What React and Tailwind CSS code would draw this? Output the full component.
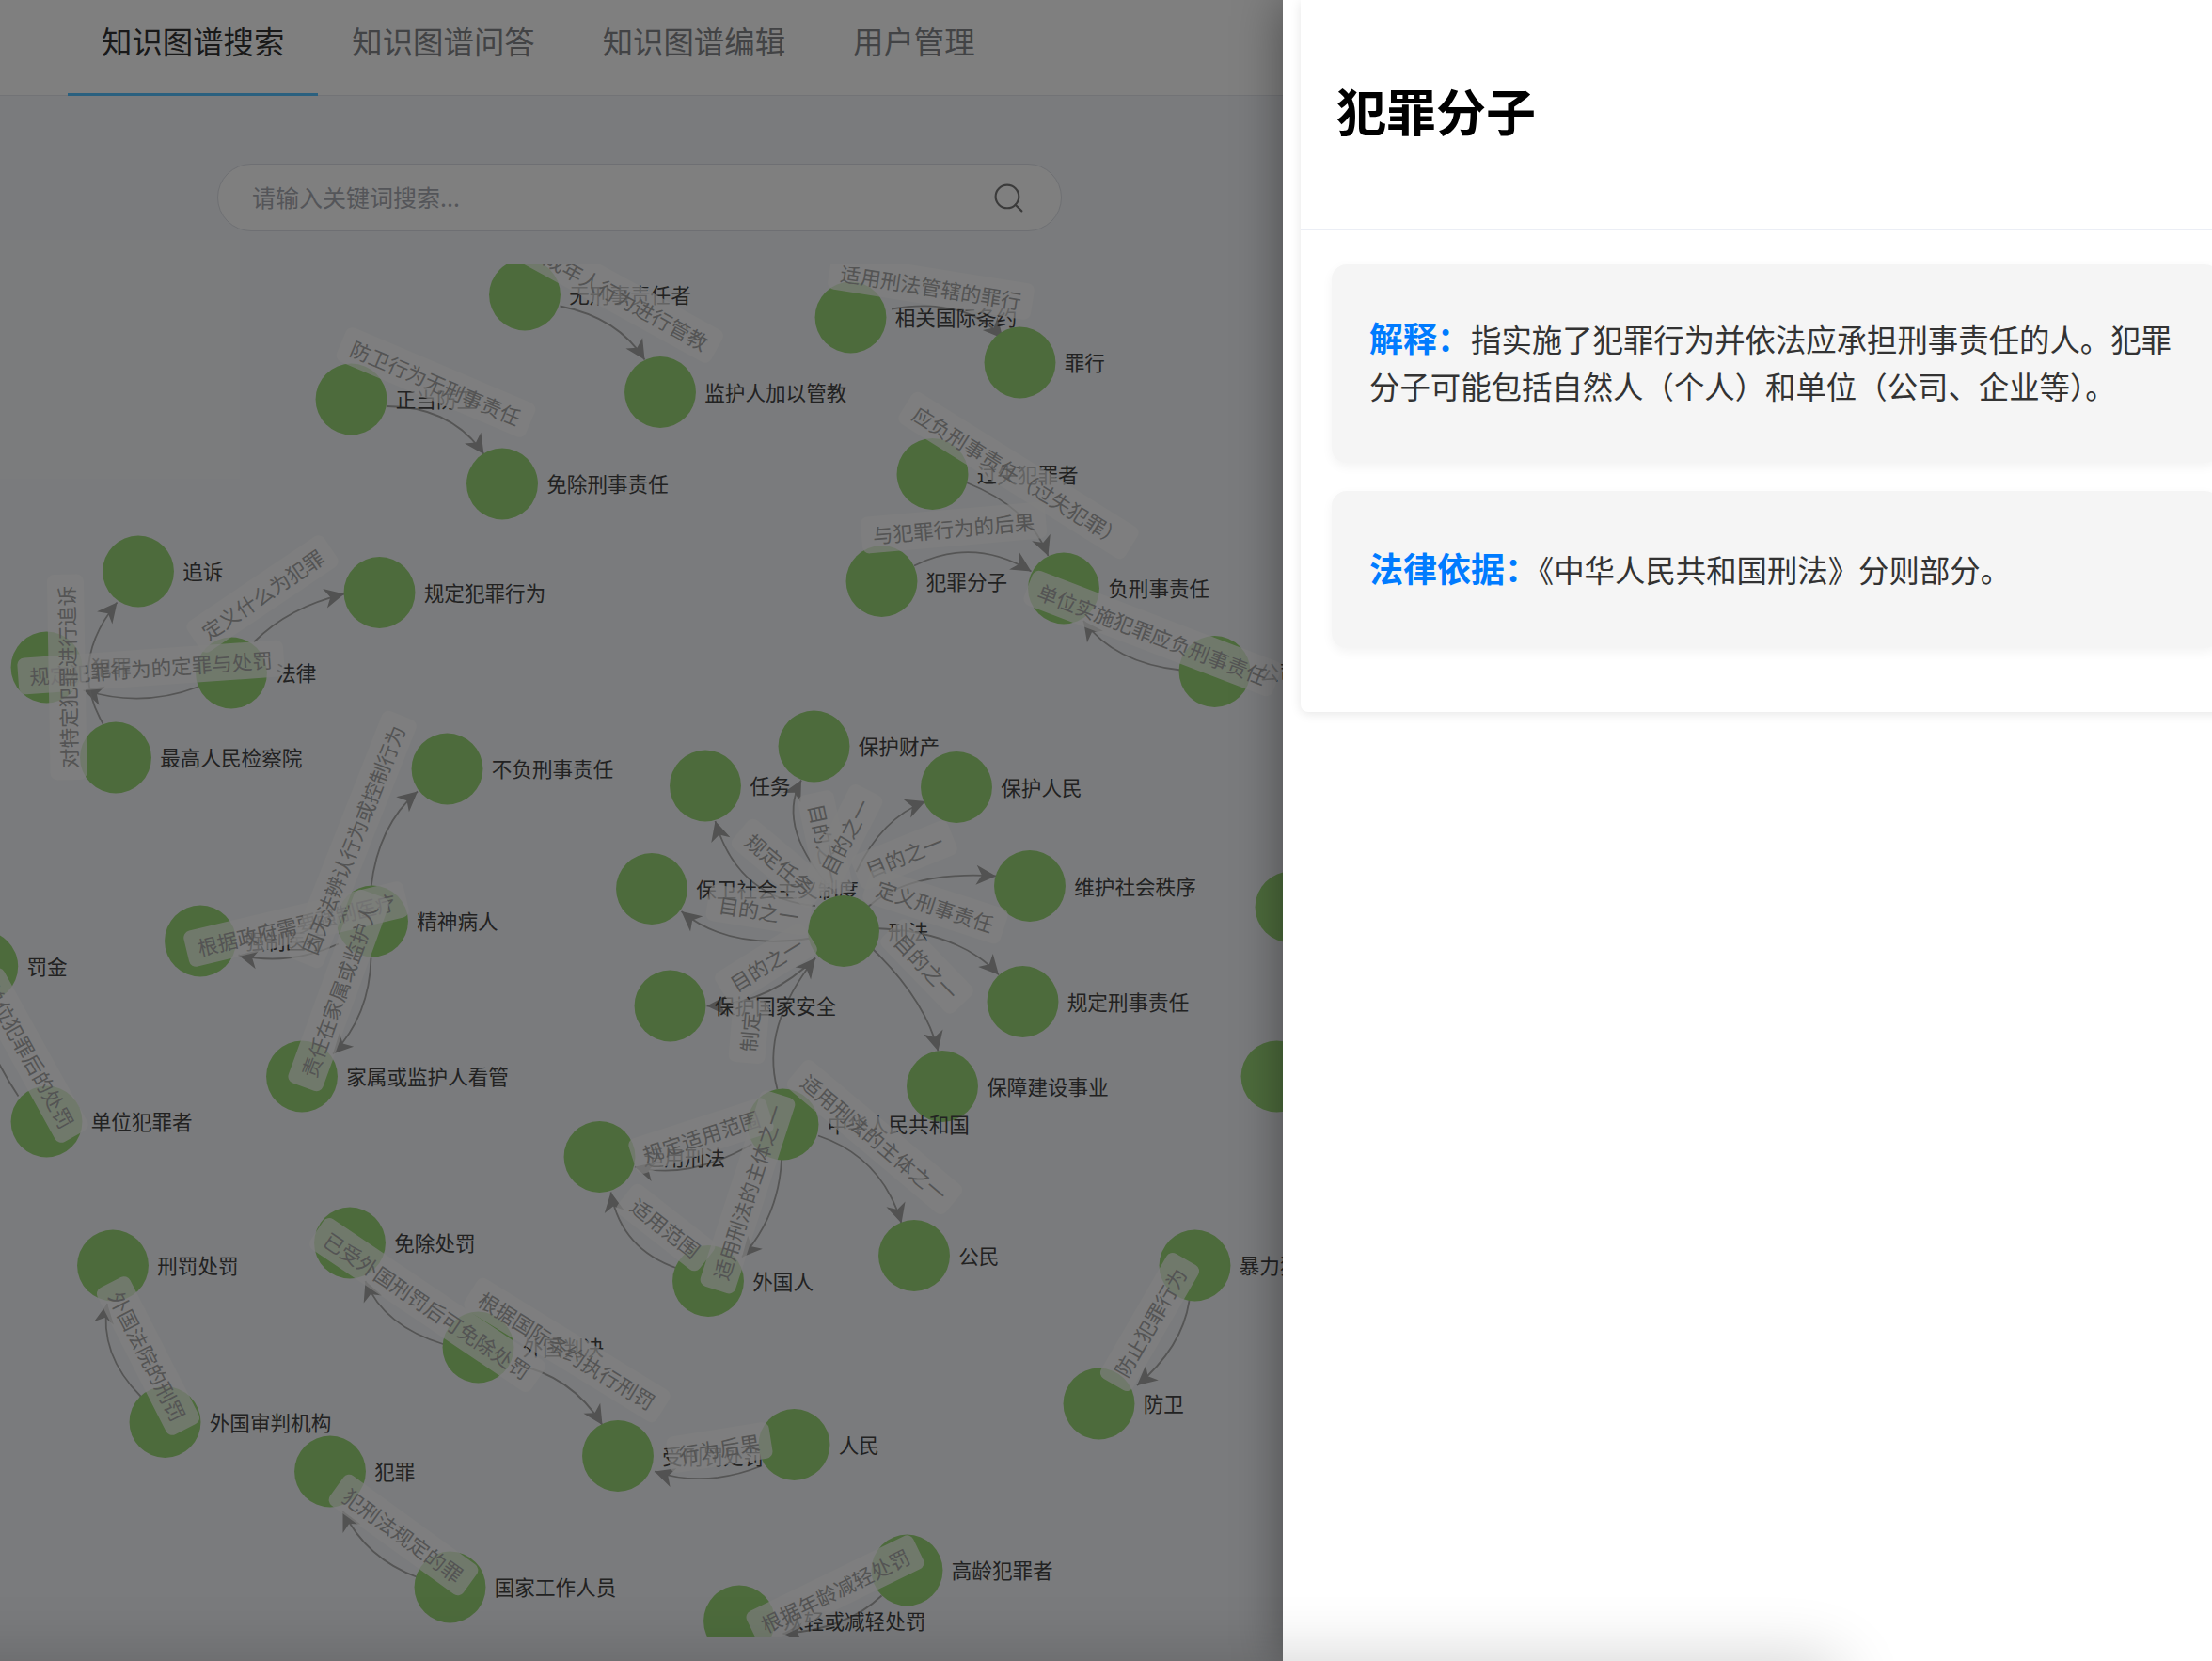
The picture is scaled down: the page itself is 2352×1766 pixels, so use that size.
import React from "react";
import { Search } from "lucide-react";

const tabs = ["知识图谱搜索", "知识图谱问答", "知识图谱编辑", "用户管理"];

// graph coordinates, drawn in a 1568 wide viewBox
const nodes = [
  [372, 209, "无刑事责任者"],
  [468, 278, "监护人加以管教"],
  [603, 225, "相关国际条约"],
  [723, 257, "罪行"],
  [249, 283, "正当防卫"],
  [356, 343, "免除刑事责任"],
  [661, 336, "过失犯罪者"],
  [98, 405, "追诉"],
  [269, 420, "规定犯罪行为"],
  [625, 412, "犯罪分子"],
  [754, 417, "负刑事责任"],
  [164, 477, "法律"],
  [33, 473, "犯罪"],
  [82, 537, "最高人民检察院"],
  [317, 545, "不负刑事责任"],
  [861, 476, "公司"],
  [577, 529, "保护财产"],
  [500, 557, "任务"],
  [678, 558, "保护人民"],
  [462, 630, "保卫社会主义制度"],
  [730, 628, "维护社会秩序"],
  [598, 660, "刑法"],
  [725, 710, "规定刑事责任"],
  [475, 713, "保护国家安全"],
  [668, 770, "保障建设事业"],
  [264, 653, "精神病人"],
  [142, 667, "强制医疗"],
  [-12.5, 685, "罚金"],
  [214, 763, "家属或监护人看管"],
  [33, 795, "单位犯罪者"],
  [555, 797, "中华人民共和国"],
  [425, 820, "适用刑法"],
  [502, 908, "外国人"],
  [648, 890, "公民"],
  [248, 881, "免除处罚"],
  [80, 897, "刑罚处罚"],
  [847, 897, "暴力犯罪"],
  [779, 995, "防卫"],
  [339, 955, "外国判决"],
  [117, 1008, "外国审判机构"],
  [438, 1032, "受刑罚处罚"],
  [563, 1024, "人民"],
  [234, 1043, "犯罪"],
  [319, 1125, "国家工作人员"],
  [643, 1113, "高龄犯罪者"],
  [524, 1149, "从轻或减轻处罚"],
  [915, 643, ""],
  [905, 763, ""],
];

// start, control, tip
const edges = [
  [397, 217, 438, 225, 457, 255],
  [274, 288, 320, 288, 343, 322],
  [632, 219, 685, 210, 711, 240],
  [685, 342, 730, 360, 743, 394],
  [648, 401, 690, 380, 731, 405],
  [837, 475, 790, 470, 768, 440],
  [180, 455, 205, 430, 244, 421],
  [140, 487, 100, 502, 59, 489],
  [73, 513, 48, 470, 83, 427],
  [263, 629, 268, 585, 296, 561],
  [240, 669, 205, 685, 169, 677],
  [263, 679, 262, 720, 236, 747],
  [13, 777, -5, 750, -15, 720],
  [594, 635, 549, 588, 568, 553],
  [578, 642, 523, 637, 507, 582],
  [607, 618, 625, 580, 656, 568],
  [615, 643, 644, 617, 706, 621],
  [620, 658, 680, 660, 708, 691],
  [619, 673, 656, 709, 665, 745],
  [575, 665, 517, 674, 483, 646],
  [578, 679, 544, 712, 501, 713],
  [551, 772, 539, 728, 578, 679],
  [533, 811, 488, 837, 450, 827],
  [580, 805, 625, 820, 639, 867],
  [554, 822, 552, 862, 526, 891],
  [480, 899, 440, 885, 433, 845],
  [315, 953, 272, 940, 259, 908],
  [365, 967, 405, 975, 427, 1010],
  [540, 1039, 500, 1055, 464, 1043],
  [100, 990, 70, 960, 76, 924],
  [296, 1118, 260, 1105, 243, 1071],
  [843, 922, 838, 955, 806, 982],
  [625, 1131, 600, 1155, 555, 1158],
];

// centre x, centre y, angle, text; later ones lie over earlier ones
const edgeLabels = [
  [107, 473, -4, "规定犯罪行为的定罪与处罚"],
  [47.5, 480, -91, "对特定犯罪进行追诉"],
  [186, 421, -34, "定义什么为犯罪"],
  [309, 271, 23, "防卫行为无刑事责任"],
  [438, 209, 28.8, "未成年人行为进行管教"],
  [660, 203, 9, "适用刑法管辖的罪行"],
  [722, 337, 32, "应负刑事责任（过失犯罪）"],
  [676, 374, -5, "与犯罪行为的后果"],
  [817, 449, 21, "单位实施犯罪应负刑事责任"],
  [585, 598, 78, "目的之一"],
  [599, 593, -63, "目的之一"],
  [641, 606, -22, "目的之一"],
  [663, 642, 18, "定义刑事责任"],
  [657, 685, 46, "目的之一"],
  [553, 612, 40, "规定任务"],
  [538, 645, 9, "目的之一"],
  [543, 683, -32, "目的之一"],
  [531, 731, -85, "制定"],
  [497, 805, -18, "规定适用范围"],
  [620, 806, 40, "适用刑法的主体之一"],
  [530, 845, -72, "适用刑法的主体之一"],
  [472, 870, 38, "适用范围"],
  [105, 961, 63, "外国法院的刑罚"],
  [303, 925, 34, "已受外国刑罚后可免除处罚"],
  [402, 957, 31.6, "根据国际条约执行刑罚"],
  [510, 1026, -9, "行为后果"],
  [592, 1127, -26, "根据年龄减轻处罚"],
  [815, 937, -60, "防止犯罪行为"],
  [286, 1088, 36, "犯刑法规定的罪"],
  [210, 655, -13.4, "根据政府需要强制医疗"],
  [240, 702, -70, "责任在家属或监护人"],
  [250, 595, -68.5, "因无法辨认行为或控制行为"],
  [21, 748, 61, "单位犯罪后的处罚"],
];

function arrowPoints(cx, cy, tx, ty) {
  const len = Math.hypot(tx - cx, ty - cy);
  const ux = (tx - cx) / len;
  const uy = (ty - cy) / len;
  const L = 14;
  const W = 7;
  const p = (back, side) => `${tx - ux * back - uy * side},${ty - uy * back + ux * side}`;
  return [p(0, 0), p(L, W), p(L * 0.72, 0), p(L, -W)].join(" ");
}

function Graph() {
  return (
    <svg viewBox="0 187.33 1568 972.67" className="block w-[2352px] h-[1459px]">
      {edges.map(([sx, sy, cx, cy, tx, ty], i) => (
        <g key={i}>
          <path d={`M${sx} ${sy}Q${cx} ${cy} ${tx} ${ty}`} fill="none" stroke="#aaaaaa" strokeWidth="1.2" />
          <polygon points={arrowPoints(cx, cy, tx, ty)} fill="#a4a4a4" />
        </g>
      ))}
      {nodes.map(([x, y, name], i) => (
        <g key={i}>
          <circle cx={x} cy={y} r="25.3" fill="#9ad678" />
          <text x={x + 31.5} y={y - 0.5} dominantBaseline="central" fontSize="14.4" className="fill-[#444444]">
            {name}
          </text>
        </g>
      ))}
      {edgeLabels.map(([x, y, angle, text], i) => (
        <g key={i} transform={`translate(${x} ${y}) rotate(${angle})`}>
          <rect
            x={-(text.length * 14.4 + 16) / 2}
            y="-13"
            width={text.length * 14.4 + 16}
            height="26"
            rx="5"
            fill="#ffffff"
            fillOpacity="0.7"
          />
          <text textAnchor="middle" dominantBaseline="central" fontSize="14.4" className="fill-[#a8a8a8]">
            {text}
          </text>
        </g>
      ))}
    </svg>
  );
}

function Drawer() {
  return (
    <aside className="absolute top-0 right-0 bottom-0 z-20 w-[988px] overflow-hidden bg-white pl-[19px] shadow-[0_0_48px_rgba(0,0,0,0.4)]">
      <div className="w-[1000px] rounded-b-lg bg-white pb-[68px] shadow-[0_2px_12px_rgba(0,0,0,0.1)]">
        <div className="flex h-[245px] items-center border-b border-[#ebeef5] pb-[9px] pl-[38px]">
          <h2 className="text-[53px] font-bold text-black">犯罪分子</h2>
        </div>
        <div className="flex flex-col gap-[30px] pt-[36px] pl-[33px]">
          <div className="flex h-[211px] w-[944px] items-center rounded-2xl bg-[#f5f5f5] px-[40px] pb-[5px] text-[32.4px] leading-[50px] text-[#333333] shadow-[0_4px_12px_rgba(0,0,0,0.05)]">
            <p>
              <span className="text-[36px] font-bold text-[#007bff]">解释：</span>
              指实施了犯罪行为并依法应承担刑事责任的人。犯罪分子可能包括自然人（个人）和单位（公司、企业等）。
            </p>
          </div>
          <div className="flex h-[167px] w-[944px] items-center rounded-2xl bg-[#f5f5f5] px-[40px] pb-[3px] text-[32.4px] leading-[50px] text-[#333333] shadow-[0_4px_12px_rgba(0,0,0,0.05)]">
            <p>
              <span className="text-[36px] font-bold text-[#007bff]">法律依据：</span>
              《中华人民共和国刑法》分则部分。
            </p>
          </div>
        </div>
      </div>
    </aside>
  );
}

export default function App() {
  return (
    <div className="relative h-[1766px] w-[2352px] overflow-hidden bg-[#f5f7fa] font-['Noto_Sans_CJK_SC',sans-serif]">
      <header className="flex h-[102px] border-b border-[#e4e7ed] bg-white pl-[72px]">
        {tabs.map((tab, i) => (
          <div
            key={tab}
            className={
              i === 0
                ? "flex h-[102px] items-center border-b-[3px] border-[#54c0ff] px-[36px] pb-[12px] text-[32.4px] text-[#333333]"
                : "flex h-[102px] items-center px-[36px] pb-[15px] text-[32.4px] text-[#85878a]"
            }
          >
            {tab}
          </div>
        ))}
      </header>

      <div className="flex justify-start pt-[72px] pl-[231px]">
        <div className="flex h-[72px] w-[898px] items-center rounded-full border border-[#dcdfe6] bg-white pr-[37px] pl-[36px]">
          <input
            readOnly
            placeholder="请输入关键词搜索..."
            className="flex-1 bg-transparent text-[25px] outline-none placeholder:text-[#a8abb2]"
          />
          <Search size={37} strokeWidth={1.4} className="text-[#777777]" />
        </div>
      </div>

      <div className="mt-[35px]">
        <Graph />
      </div>

      <div className="absolute inset-0 z-10 bg-black/50" />
      <Drawer />
      <div className="absolute top-[1766px] left-[-100px] z-30 h-[60px] w-[2060px] rounded-[40px] shadow-[0_0_70px_rgba(0,0,0,0.2)]" />
    </div>
  );
}
